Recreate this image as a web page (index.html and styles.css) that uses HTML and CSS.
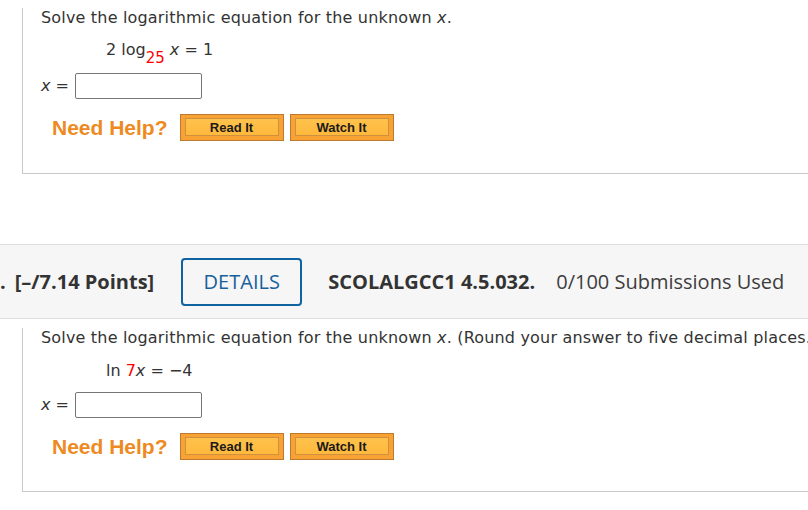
FILE: index.html
```html
<!DOCTYPE html>
<html>
<head>
<meta charset="utf-8">
<link rel="stylesheet" href="styles.css">
</head>
<body>
<div class="page">
  <section class="card card-first">
    <p class="question">Solve the logarithmic equation for the unknown <i>x</i>.</p>
    <div class="equation">2 log<sub class="red">25</sub> <i>x</i> = 1</div>
    <div class="answer-row">
      <span class="answer-label"><i>x</i> =</span>
      <span class="answer-box"></span>
    </div>
    <div class="help-row">
      <span class="need-help">Need Help?</span>
      <span class="help-btn"><span class="help-btn-inner">Read It</span></span>
      <span class="help-btn"><span class="help-btn-inner">Watch It</span></span>
    </div>
  </section>

  <header class="qheader">
    <span class="qnum">.</span>
    <span class="points">[–/7.14 Points]</span>
    <span class="details">DETAILS</span>
    <span class="code">SCOLALGCC1 4.5.032.</span>
    <span class="subs">0/100 Submissions Used</span>
  </header>

  <section class="card card-second">
    <p class="question">Solve the logarithmic equation for the unknown <i>x</i>. (Round your answer to five decimal places.)</p>
    <div class="equation">ln <span class="red">7</span><i>x</i> = −4</div>
    <div class="answer-row">
      <span class="answer-label"><i>x</i> =</span>
      <span class="answer-box"></span>
    </div>
    <div class="help-row">
      <span class="need-help">Need Help?</span>
      <span class="help-btn"><span class="help-btn-inner">Read It</span></span>
      <span class="help-btn"><span class="help-btn-inner">Watch It</span></span>
    </div>
  </section>
</div>
</body>
</html>
```

FILE: styles.css
```css
html, body {
  margin: 0;
  padding: 0;
  background: #ffffff;
  overflow: hidden;
}

.page {
  width: 808px;
  height: 510px;
  overflow: hidden;
  font-family: "DejaVu Sans", Verdana, sans-serif;
  color: #333333;
}

.card {
  margin-left: 22px;
  border-left: 1px solid #c9c9c9;
  border-bottom: 1px solid #c9c9c9;
  padding-left: 18px;
}

.card-first {
  padding-bottom: 32px;
}

.card-second {
  padding-bottom: 31px;
}

.question {
  margin: 8px 0 0;
  font-size: 16px;
  line-height: 20px;
  letter-spacing: 0.18px;
  white-space: nowrap;
}

.card-second .question {
  margin-top: 9px;
}

.equation {
  margin-top: 12px;
  padding-left: 65px;
  font-size: 16px;
  line-height: 20px;
  white-space: nowrap;
}

.card-second .equation {
  margin-top: 13px;
}

.equation sub {
  font-size: 15px;
  line-height: 0;
  vertical-align: -8px;
}

.red {
  color: #ff0000;
}

.answer-row {
  display: flex;
  align-items: center;
  margin-top: 13px;
}

.card-second .answer-row {
  margin-top: 11px;
}

.answer-label {
  width: 34px;
  font-size: 16px;
  line-height: 20px;
}

.answer-box {
  display: block;
  width: 125px;
  height: 24px;
  border: 1px solid #767676;
  border-radius: 2px;
  background: #ffffff;
}

.help-row {
  display: flex;
  align-items: center;
  margin-top: 15px;
  padding-left: 11px;
}

.need-help {
  font-family: "Liberation Sans", Arial, sans-serif;
  font-weight: bold;
  font-size: 21px;
  color: #ee8a1f;
  margin-right: 12px;
}

.help-btn {
  display: block;
  box-sizing: border-box;
  width: 104px;
  height: 27px;
  padding: 3px 4px 4px;
  border: 1px solid #bb7a30;
  background: #f7a233;
  margin-right: 6px;
}

.help-btn-inner {
  display: flex;
  align-items: center;
  justify-content: center;
  box-sizing: border-box;
  height: 100%;
  border: 1px solid #cf9040;
  background: linear-gradient(#ffc24c, #ffb93d);
  font-family: "Liberation Sans", Arial, sans-serif;
  font-weight: bold;
  font-size: 13px;
  color: #1a1a1a;
}

.qheader {
  margin-top: 70px;
  height: 73px;
  border-top: 1px solid #dedede;
  border-bottom: 1px solid #dedede;
  background: #f6f6f6;
  display: flex;
  align-items: center;
  font-family: "Open Sans", sans-serif;
  font-size: 20px;
  color: #333333;
  white-space: nowrap;
}

.qnum {
  font-weight: bold;
  margin-left: 0;
  margin-right: 9px;
}

.points {
  font-weight: bold;
  margin-right: 27px;
}

.details {
  box-sizing: border-box;
  width: 121px;
  height: 48px;
  border: 2px solid #0f64a0;
  border-radius: 4px;
  color: #17609a;
  display: flex;
  align-items: center;
  justify-content: center;
  margin-right: 26px;
}

.code {
  font-weight: bold;
  margin-right: 21px;
}

.subs {
  color: #3d3d3d;
}
```
